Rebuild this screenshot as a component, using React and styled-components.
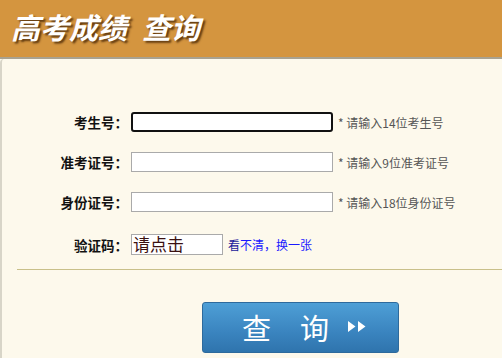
import React from "react";
import styled, { createGlobalStyle } from "styled-components";

const Global = createGlobalStyle`
  html, body { margin: 0; padding: 0; background: #fdf9ec; }
  body { font-family: "Noto Sans CJK SC", "Liberation Sans", sans-serif; }
  * { box-sizing: border-box; }
`;

const Page = styled.div`
  width: 502px;
  height: 358px;
  overflow: hidden;
  display: flex;
  flex-direction: column;
`;

const Header = styled.div`
  height: 59px;
  background: #d4953f;
  border-bottom: 2px solid #a9a290;
  display: flex;
  align-items: center;
  padding-left: 11px;
  padding-bottom: 6px;
`;

const Title = styled.h1`
  margin: 0;
  color: #fff;
  font-size: 29px;
  font-weight: 700;
  font-style: italic;
  text-shadow: 2px 2px 2px rgba(60, 30, 0, 0.75);
  font-family: "Noto Sans CJK SC", sans-serif;
  display: flex;
  gap: 15px;
`;

const Panel = styled.div`
  flex: 1;
  background: #fdf9ec;
  border-left: 2px solid #d8d5c8;
  border-top-left-radius: 4px;
  display: flex;
  flex-direction: column;
  padding-top: 53px;
`;

const Form = styled.div`
  display: flex;
  flex-direction: column;
  gap: 20px;
`;

const Row = styled.div`
  display: flex;
  align-items: center;
  height: 20px;
`;

const Label = styled.label`
  width: 129px;
  text-align: right;
  font-size: 13.5px;
  font-weight: 700;
  color: #111;
  padding-right: 3px;
`;

const Input = styled.div`
  width: 202px;
  height: 20px;
  background: #fff;
  border: ${(p) => (p.$focused ? "2px solid #111" : "1px solid #aaa")};
  border-radius: ${(p) => (p.$focused ? "3px" : "0")};
`;

const Hint = styled.span`
  margin-left: 5px;
  font-size: 12px;
  color: #555;
`;

const CaptchaRow = styled(Row)`
  margin-top: 2px;
  height: 21px;
`;

const CaptchaBox = styled.div`
  width: 92px;
  height: 21px;
  background: #fff;
  border: 1px solid #aaa;
  font-size: 17px;
  line-height: 18px;
  color: #3a1010;
  padding-left: 1px;
  white-space: nowrap;
`;

const Link = styled.a`
  margin-left: 5px;
  font-size: 12px;
  color: #1a1aff;
  text-decoration: none;
`;

const LinkPrefix = styled.span`
  color: #1a1a9a;
`;

const Divider = styled.div`
  margin: 14px 0 0 15px;
  height: 1px;
  background: #c9c08a;
`;

const ButtonWrap = styled.div`
  display: flex;
  padding-left: 200px;
  margin-top: 32px;
`;

const Button = styled.button`
  width: 197px;
  height: 51px;
  border: 1px solid #2e6a9c;
  border-radius: 3px;
  background: linear-gradient(#4e9fd6, #3a84bf 60%, #2f74ad);
  color: #fff;
  font-family: "Noto Sans CJK SC", sans-serif;
  font-size: 29px;
  display: flex;
  align-items: center;
  justify-content: center;
  padding: 0 0 2px 8px;
  gap: 18px;
`;

const Arrows = styled.svg`
  display: block;
`;

export default function App() {
  return (
    <Page>
      <Global />
      <Header>
        <Title>
          <span>高考成绩</span>
          <span>查询</span>
        </Title>
      </Header>
      <Panel>
        <Form>
          <Row>
            <Label>考生号：</Label>
            <Input $focused />
            <Hint>* 请输入14位考生号</Hint>
          </Row>
          <Row>
            <Label>准考证号：</Label>
            <Input />
            <Hint>* 请输入9位准考证号</Hint>
          </Row>
          <Row>
            <Label>身份证号：</Label>
            <Input />
            <Hint>* 请输入18位身份证号</Hint>
          </Row>
          <CaptchaRow>
            <Label>验证码：</Label>
            <CaptchaBox>请点击</CaptchaBox>
            <Link href="#"><LinkPrefix>看</LinkPrefix>不清，换一张</Link>
          </CaptchaRow>
        </Form>
        <Divider />
        <ButtonWrap>
          <Button>
            <span>查　询</span>
            <Arrows width="20" height="13" viewBox="0 0 20 13">
              <path d="M1 1 L8.5 6.5 L1 12 Z M11 1 L18.5 6.5 L11 12 Z" fill="#fff" />
            </Arrows>
          </Button>
        </ButtonWrap>
      </Panel>
    </Page>
  );
}
